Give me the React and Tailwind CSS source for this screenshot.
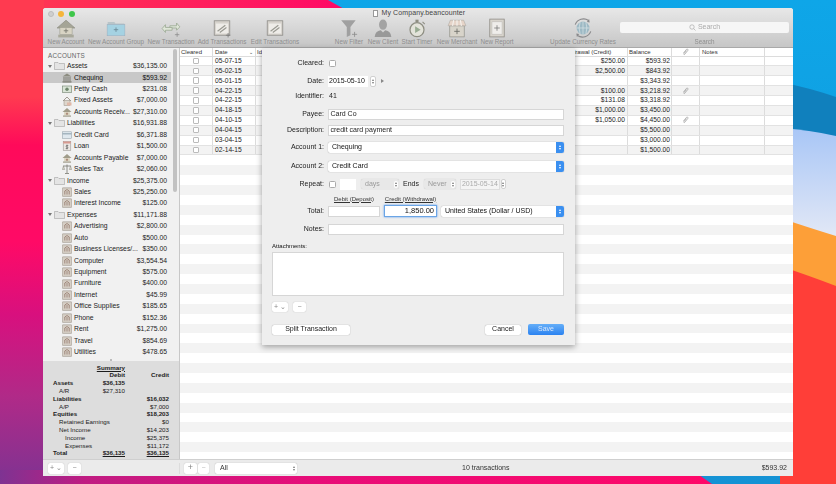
import React from "react";

const Wallpaper = () => (
  <svg className="absolute inset-0" width="836" height="484" viewBox="0 0 836 484">
    <defs>
      <linearGradient id="sky" x1="0" y1="0" x2="0" y2="1"><stop offset="0" stopColor="#0ea6e8" /><stop offset="1" stopColor="#1592d4" /></linearGradient>
      <linearGradient id="cloud" x1="0" y1="0" x2="0" y2="1"><stop offset="0" stopColor="#a8c6f6" /><stop offset="1" stopColor="#e4e9f6" /></linearGradient>
      <linearGradient id="leftg" x1="0" y1="0" x2="0" y2="1">
        <stop offset="0" stopColor="#ff3a50" /><stop offset="0.2" stopColor="#ff3a50" /><stop offset="0.3" stopColor="#ff0a5a" /><stop offset="0.5" stopColor="#ff0a66" /><stop offset="0.65" stopColor="#d8107e" /><stop offset="0.82" stopColor="#b02a88" /><stop offset="1" stopColor="#7e3392" />
      </linearGradient>
      <linearGradient id="topg" x1="0" y1="0" x2="1" y2="0"><stop offset="0" stopColor="#ff3a50" /><stop offset="1" stopColor="#ff0a66" /></linearGradient>
      <linearGradient id="botg" x1="0" y1="0" x2="1" y2="0">
        <stop offset="0" stopColor="#7e3392" /><stop offset="0.12" stopColor="#c01c82" /><stop offset="0.45" stopColor="#e80d78" /><stop offset="1" stopColor="#ff0868" />
      </linearGradient>
    </defs>
    <rect width="836" height="484" fill="url(#sky)" />
    <path d="M780 82 Q810 88 836 97 V140 H780 Z" fill="#1080bd" />
    <path d="M780 128 Q810 130 836 136 V240 H780 Z" fill="url(#cloud)" />
    <path d="M780 218 Q810 228 836 236 V300 H780 Z" fill="#fd9f38" />
    <path d="M780 266 Q810 276 836 286 V484 H780 Z" fill="#ff3e38" />
    <path d="M0 0 H328 L346 10 H0 Z" fill="url(#topg)" />
    <rect width="44" height="484" fill="url(#leftg)" />
    <path d="M0 470 H692 L712 484 H0 Z" fill="url(#botg)" />
  </svg>
);

const Tool = ({ w, label, children }) => (
  <div className={`flex flex-col items-center shrink-0 ${w}`}>
    <div className="h-[18px] flex items-center justify-center">{children}</div>
    <span className="text-[6.3px] leading-[8px] text-[#8e8e8e] mt-[1px] whitespace-nowrap">{label}</span>
  </div>
);

const S = ({ children }) => (
  <svg width="20" height="20" viewBox="0 0 18 18" fill="none">{children}</svg>
);

const IcoHouse = () => (
  <S><path d="M1 9 L9 2 L17 9 Z" fill="#a5a596" stroke="#8b8b80" strokeWidth=".6" /><rect x="3.5" y="8.5" width="11" height="6.5" fill="#d8d4c4" stroke="#9a9a8c" strokeWidth=".5" /><rect x="2" y="15" width="14" height="2.5" fill="#a9a99b" /><path d="M9 9.5v4M7 11.5h4" stroke="#77776e" strokeWidth=".8" /></S>
);
const IcoFolder = () => (
  <S><path d="M1.5 3.5h6l1 1.5h8v2h-15z" fill="#b9c4c8" /><rect x="1" y="6" width="16" height="10" fill="#a5d2e2" stroke="#9ab" strokeWidth=".4" /><path d="M9 8.5v4M7 10.5h4" stroke="#6c8c9a" strokeWidth=".8" /></S>
);
const IcoTrans = () => (
  <S><path d="M8 7H14V4.500L17 8L14 11V9H8z" fill="#dfe6d8" stroke="#98a890" strokeWidth=".7" /><path d="M10 8.500H4V6L1 9.500L4 13V11h6z" fill="#dfe6d8" stroke="#98a890" strokeWidth=".7" /><path d="M14.500 13v4M12.500 15h4" stroke="#8c8c8c" strokeWidth=".7" /></S>
);
const IcoBox = ({ plus }) => (
  <S><rect x="2" y="2.500" width="14" height="13" fill="#d6d2cc" stroke="#8c8a86" strokeWidth=".7" /><rect x="3.500" y="5" width="11" height="9" fill="#eeece8" /><path d="M5 12 L12 6.500M7 13L13 8.500" stroke="#9a9a92" strokeWidth="1.100" />{plus && <path d="M14.500 13.500v4M12.500 15.500h4" stroke="#777" strokeWidth=".7" />}</S>
);
const IcoFunnel = () => (
  <S><path d="M2 2 H15 L10.300 8 V15.500 L7 17 V8 Z" fill="#a0a0a0" /><path d="M14 12.500v4.500M11.700 14.700h4.600" stroke="#888" strokeWidth=".7" /></S>
);
const IcoPerson = () => (
  <S><ellipse cx="9" cy="6" rx="3.600" ry="4.600" fill="#a3a3a3" /><path d="M1.500 17 Q2 11.500 7 11 L9 13 L11 11 Q16 11.500 16.500 17 Z" fill="#999" /></S>
);
const IcoTimer = () => (
  <S><circle cx="9" cy="10.500" r="6.300" fill="#e3e3da" stroke="#8e8e82" strokeWidth="1.100" /><path d="M7.300 7.500 L12.300 10.500 L7.300 13.500 Z" fill="#98ab92" /><rect x="7.600" y="1.500" width="2.800" height="2.200" fill="#8e8e82" /><path d="M14 3.500l2 2" stroke="#8e8e82" /></S>
);
const IcoShop = () => (
  <S><rect x="2.500" y="7" width="13" height="10" fill="#d8d4ca" stroke="#8d8d85" strokeWidth=".6" /><path d="M3 2h12l2 5H1z" fill="#e6d4c8" stroke="#a09a92" strokeWidth=".4" /><path d="M6 2 5 7M9 2v5M12 2l1 5" stroke="#f4f2ee" strokeWidth="1" /><path d="M9 9.500v5M6.500 12h5" stroke="#6e6e68" strokeWidth=".8" /></S>
);
const IcoReport = () => (
  <S><rect x="2.500" y="1" width="13" height="16" fill="#d8d4cc" stroke="#8d8a84" strokeWidth=".7" /><rect x="4.500" y="3.500" width="9" height="11" fill="#efedea" stroke="#aaa" strokeWidth=".3" /><path d="M9 6.500v5M6.500 9h5" stroke="#777" strokeWidth=".7" /></S>
);
const IcoGlobe = () => (
  <S><circle cx="9" cy="9" r="5.800" fill="#9db9c4" /><path d="M9 3.200v11.600M3.200 9h11.600M6.400 3.800Q4.600 9 6.400 14.200M11.600 3.800Q13.400 9 11.600 14.200" stroke="#dde6e8" strokeWidth=".6" /><path d="M2 6 A8 8 0 0 1 14 2.200M16 12 A8 8 0 0 1 4 15.800" stroke="#88888a" strokeWidth="1" /><path d="M14.500 1 L15 4 L12.500 3.600Z M3.500 17 L3 14 L5.500 14.400Z" fill="#88888a" /></S>
);

const Mini = ({ children }) => <svg width="10" height="10" viewBox="0 0 10 10" fill="none" className="shrink-0">{children}</svg>;
const sideIcons = {
  folder: <svg width="11" height="8" viewBox="0 0 11 8" className="shrink-0"><path d="M.5.5h3.500l1 1h5.500v6h-10z" fill="#e4e4e4" stroke="#a3a3a3" strokeWidth=".6" /></svg>,
  bank: <Mini><path d="M.5 3.500 5 .5l4.500 3z" fill="#8c8c80" /><path d="M2 4v4M4 4v4M6 4v4M8 4v4" stroke="#77776c" strokeWidth="1" /><rect x=".5" y="8.300" width="9" height="1.200" fill="#77776c" /></Mini>,
  cash: <Mini><rect x=".3" y="2" width="9.400" height="6.500" fill="#d9e4d6" stroke="#70806e" strokeWidth=".6" /><circle cx="5" cy="5.200" r="1.700" fill="#6f866c" /></Mini>,
  fixed: <Mini><path d="M1 5 5 1l4 4" stroke="#8c8478" strokeWidth=".8" /><rect x="2" y="4.500" width="6" height="5" fill="#ddd6cc" stroke="#948c80" strokeWidth=".5" /><rect x="5" y="6.500" width="4.500" height="3" fill="#e0b8a8" /></Mini>,
  house: <Mini><path d="M.5 5 5 1l4.500 4z" fill="#a09c8a" /><rect x="2" y="5" width="6" height="3.500" fill="#ded8c6" /><rect x="1" y="8.500" width="8" height="1.200" fill="#a09c8a" /><path d="M5 5.500v2.500M3.800 6.800h2.400" stroke="#8c5a4a" strokeWidth=".6" /></Mini>,
  card: <Mini><rect x=".3" y="1.800" width="9.400" height="6.500" fill="#dfe8ee" stroke="#8c9aa4" strokeWidth=".5" /><rect x=".5" y="3.200" width="9" height="1.200" fill="#96a8b4" /></Mini>,
  loan: <Mini><rect x="1.200" y=".5" width="7.600" height="9" fill="#ece8e4" stroke="#8e8a86" strokeWidth=".5" /><rect x="1.200" y=".5" width="7.600" height="2" fill="#d89a90" /><path d="M5 3.500v5M6.300 4.500H4.500a.8.8 0 0 0 0 1.500h1a.8.8 0 0 1 0 1.500H3.700" stroke="#444" strokeWidth=".5" /></Mini>,
  scale: <Mini><path d="M5 .5V9M1 2h8M3 9.500h4" stroke="#77776e" strokeWidth=".8" /><path d="M.3 5.500 1.500 2l1.200 3.500zM7.300 5.500 8.500 2l1.200 3.500z" fill="#d8d4c8" stroke="#77776e" strokeWidth=".4" /></Mini>,
  exp: <Mini><rect x=".3" y=".8" width="9.400" height="8.600" rx=".6" fill="#d6cfc6" stroke="#90887e" strokeWidth=".5" /><path d="M2.800 7.500V4L5 2.500 7.200 4v3.500" stroke="#8a6a5c" strokeWidth=".7" /><path d="M5 4v3.500" stroke="#8a6a5c" strokeWidth=".7" /></Mini>,
};

const accounts = [
  ["g", "Assets", "$36,135.00"],
  ["bank", "Chequing", "$593.92", true],
  ["cash", "Petty Cash", "$231.08"],
  ["fixed", "Fixed Assets", "$7,000.00"],
  ["house", "Accounts Receiv...", "$27,310.00"],
  ["g", "Liabilities", "$16,931.88"],
  ["card", "Credit Card", "$6,371.88"],
  ["loan", "Loan", "$1,500.00"],
  ["house", "Accounts Payable", "$7,000.00"],
  ["scale", "Sales Tax", "$2,060.00"],
  ["g", "Income", "$25,375.00"],
  ["exp", "Sales", "$25,250.00"],
  ["exp", "Interest Income", "$125.00"],
  ["g", "Expenses", "$11,171.88"],
  ["exp", "Advertising", "$2,800.00"],
  ["exp", "Auto", "$500.00"],
  ["exp", "Business Licenses/...", "$350.00"],
  ["exp", "Computer", "$3,554.54"],
  ["exp", "Equipment", "$575.00"],
  ["exp", "Furniture", "$400.00"],
  ["exp", "Internet", "$45.99"],
  ["exp", "Office Supplies", "$185.65"],
  ["exp", "Phone", "$152.36"],
  ["exp", "Rent", "$1,275.00"],
  ["exp", "Travel", "$854.69"],
  ["exp", "Utilities", "$478.65"],
];

const summary = [
  ["Assets", "pl-[10px]", "$36,135", "", true],
  ["A/R", "pl-[16px]", "$27,310", "", false],
  ["Liabilities", "pl-[10px]", "", "$16,032", true],
  ["A/P", "pl-[16px]", "", "$7,000", false],
  ["Equities", "pl-[10px]", "", "$18,203", true],
  ["Retained Earnings", "pl-[16px]", "", "$0", false],
  ["Net Income", "pl-[16px]", "", "$14,203", false],
  ["Income", "pl-[22px]", "", "$25,375", false],
  ["Expenses", "pl-[22px]", "", "$11,172", false],
];

const rows = [
  ["05-07-15", "$250.00", "$593.92", false],
  ["05-02-15", "$2,500.00", "$843.92", false],
  ["05-01-15", "", "$3,343.92", false],
  ["04-22-15", "$100.00", "$3,218.92", true],
  ["04-22-15", "$131.08", "$3,318.92", false],
  ["04-18-15", "$1,000.00", "$3,450.00", false],
  ["04-10-15", "$1,050.00", "$4,450.00", true],
  ["04-04-15", "", "$5,500.00", false],
  ["03-04-15", "", "$3,000.00", false],
  ["02-14-15", "", "$1,500.00", false],
];

const Clip = () => (
  <svg width="7" height="8" viewBox="0 0 7 8" fill="none"><path d="M1.500 5 4.500 1.300a.9.9 0 0 1 1.400 1.100L2.700 6.300a.5.5 0 0 1-.9-.6L4.500 2.600" stroke="#9a9a9a" strokeWidth=".7" /></svg>
);

const Stepper = ({ cls = "h-[11px] w-[6px]" }) => (
  <span className={`flex flex-col items-center justify-center gap-[1px] bg-white rounded-[2px] border border-[#d0d0d0] shrink-0 ${cls}`}>
    <span className="w-0 h-0 border-x-[1.5px] border-x-transparent border-b-[2px] border-b-[#777]" />
    <span className="w-0 h-0 border-x-[1.5px] border-x-transparent border-t-[2px] border-t-[#777]" />
  </span>
);

const BlueSelect = ({ text, cls }) => (
  <div className={`h-[11px] bg-white rounded-[2px] shadow-[0_0_1px_#888] flex items-center justify-between ${cls}`}>
    <span className="pl-[4px] text-[7px] text-[#111]">{text}</span>
    <span className="w-[8px] h-full bg-[#3a8ff0] rounded-r-[2px] flex flex-col items-center justify-center gap-[1px]">
      <span className="w-0 h-0 border-x-[1.5px] border-x-transparent border-b-[2px] border-b-white" />
      <span className="w-0 h-0 border-x-[1.5px] border-x-transparent border-t-[2px] border-t-white" />
    </span>
  </div>
);

const Label = ({ children }) => (
  <span className="w-[62px] text-right text-[7px] text-[#1c1c1c] shrink-0 mr-[4px]">{children}</span>
);
const Input = ({ children, cls = "w-[236px]" }) => (
  <div className={`h-[11px] bg-white border border-[#d6d6d6] flex items-center px-[1.500px] text-[7px] text-[#1c1c1c] ${cls}`}>{children}</div>
);
const SmallBtn = ({ cls, children }) => (
  <div className={`bg-white rounded-[2px] shadow-[0_0_1px_#aaa] flex items-center justify-center text-[7px] text-[#888] ${cls}`}>{children}</div>
);

const Dialog = () => (
  <div className="absolute left-[219px] top-0 w-[313px] h-[297px] bg-[#eeeeee] shadow-[0_2px_6px_rgba(0,0,0,0.35)] flex flex-col pt-[9px] z-10">
    <div className="flex items-center h-[12px]"><Label>Cleared:</Label><span className="w-[7px] h-[7px] ml-[1px] bg-white border border-[#aaa] rounded-[1.500px]" /></div>
    <div className="flex items-center h-[12px] mt-[6px]">
      <Label>Date:</Label>
      <div className="h-[11px] w-[40px] bg-white flex items-center pl-[1px] text-[7px] text-[#111]">2015-05-10</div>
      <Stepper cls="h-[11px] w-[6px] ml-[2px]" />
      <span className="ml-[5px] w-0 h-0 border-y-[2px] border-y-transparent border-l-[3px] border-l-[#888]" />
    </div>
    <div className="flex items-center h-[12px] mt-[3px]"><Label>Identifier:</Label><span className="text-[7px] text-[#1c1c1c] ml-[1px]">41</span></div>
    <div className="flex items-center h-[12px] mt-[6px]"><Label>Payee:</Label><Input>Card Co</Input></div>
    <div className="flex items-center h-[12px] mt-[4px]"><Label>Description:</Label><Input>credit card payment</Input></div>
    <div className="flex items-center h-[12px] mt-[5px]"><Label>Account 1:</Label><BlueSelect text="Chequing" cls="w-[236px]" /></div>
    <div className="flex items-center h-[12px] mt-[7px]"><Label>Account 2:</Label><BlueSelect text="Credit Card" cls="w-[236px]" /></div>
    <div className="flex items-center h-[12px] mt-[6px]">
      <Label>Repeat:</Label>
      <span className="w-[7px] h-[7px] ml-[1px] bg-white border border-[#aaa] rounded-[1.500px]" />
      <span className="w-[16px] h-[11px] bg-white ml-[4px]" />
      <div className="w-[38px] h-[10px] bg-[#e8e8e8] ml-[5px] flex items-center justify-between pl-[4px] pr-[1px] text-[7px] text-[#999] shadow-[0_0_1px_#bbb] rounded-[2px]">days<Stepper cls="h-[7px] w-[4px] border-0 bg-transparent" /></div>
      <span className="text-[7px] text-[#1c1c1c] ml-[4px]">Ends</span>
      <div className="w-[32px] h-[10px] bg-[#e8e8e8] ml-[5px] flex items-center justify-between pl-[4px] pr-[1px] text-[7px] text-[#999] shadow-[0_0_1px_#bbb] rounded-[2px]">Never<Stepper cls="h-[7px] w-[4px] border-0 bg-transparent" /></div>
      <div className="w-[40px] h-[11px] bg-[#f4f4f4] ml-[4px] border border-[#ddd] flex items-center pl-[1px] text-[7px] text-[#aaa] whitespace-nowrap">2015-05-14</div>
      <Stepper cls="h-[10px] w-[5px] ml-[1px]" />
    </div>
    <div className="flex items-center h-[6px] mt-[6px] pl-[66px] text-[6px] text-[#333] underline">
      <span className="w-[52px] text-center">Debit (Deposit)</span>
      <span className="w-[53px] text-center ml-[4px] whitespace-nowrap">Credit (Withdrawal)</span>
    </div>
    <div className="flex items-center h-[12px] mt-[3px]">
      <Label>Total:</Label>
      <Input cls="w-[52px]" />
      <div className="w-[53px] h-[12px] ml-[4px] bg-white border border-[#6aa5e6] shadow-[0_0_2px_#5a9cf0] flex items-center justify-end pr-[2px] text-[7.500px] text-[#111]">1,850.00</div>
      <BlueSelect text="United States (Dollar / USD)" cls="w-[123px] ml-[4px]" />
    </div>
    <div className="flex items-center h-[12px] mt-[6px]"><Label>Notes:</Label><Input /></div>
    <div className="h-[8px] mt-[7px] pl-[10px] text-[6px] leading-[8px] text-[#111]">Attachments:</div>
    <div className="h-[44px] mt-[2px] ml-[10px] w-[292px] bg-white border border-[#d6d6d6]" />
    <div className="flex h-[10px] mt-[6px] ml-[10px] gap-[5px]">
      <SmallBtn cls="w-[16px]">+ ⌄</SmallBtn>
      <SmallBtn cls="w-[13px]">−</SmallBtn>
    </div>
    <div className="flex items-center h-[11px] mt-[12px] ml-[10px] w-[292px]">
      <div className="w-[78px] h-[10px] bg-white rounded-[2px] shadow-[0_0_1px_#888] flex items-center justify-center text-[7px] text-[#1c1c1c]">Split Transaction</div>
      <div className="w-[36px] h-[10px] ml-auto bg-white rounded-[2px] shadow-[0_0_1px_#888] flex items-center justify-center text-[7px] text-[#1c1c1c]">Cancel</div>
      <div className="w-[36px] h-[11px] ml-[7px] bg-gradient-to-b from-[#64aef8] to-[#2a82f0] rounded-[2px] flex items-center justify-center text-[7px] text-[#d8e8fc]">Save</div>
    </div>
  </div>
);

export default function App() {
  return (
    <div className="relative w-[836px] h-[484px] overflow-hidden font-['Liberation_Sans',sans-serif]">
      <Wallpaper />
      <div className="absolute left-[43px] top-[8px] w-[750px] h-[468px] rounded-t-[3px] flex flex-col bg-white overflow-hidden blur-[0.4px]">
        {/* toolbar */}
        <div className="h-[40px] shrink-0 bg-gradient-to-b from-[#e8e8e8] to-[#c6c6c6] border-b border-[#a9a9a9] flex flex-col">
          <div className="h-[11px] flex items-center shrink-0">
            <div className="flex gap-[4.500px] pl-[4.500px] pt-[1px]">
              <span className="w-[6px] h-[6px] rounded-full bg-[#cfcfcf] border border-[#bdbdbd]" />
              <span className="w-[6px] h-[6px] rounded-full bg-[#f5b53a]" />
              <span className="w-[6px] h-[6px] rounded-full bg-[#3ec64a]" />
            </div>
            <span className="ml-[298px] w-[5px] h-[7px] bg-white border border-[#999] shrink-0" />
            <span className="ml-[4px] text-[7px] text-[#444] tracking-[0.1px]">My Company.beancounter</span>
          </div>
          <div className="flex items-start">
            <Tool w="w-[46px]" label="New Account"><IcoHouse /></Tool>
            <Tool w="w-[54px]" label="New Account Group"><IcoFolder /></Tool>
            <Tool w="w-[56px]" label="New Transaction"><IcoTrans /></Tool>
            <Tool w="w-[46px]" label="Add Transactions"><IcoBox plus /></Tool>
            <Tool w="w-[60px]" label="Edit Transactions"><IcoBox /></Tool>
            <div className="w-[27px] shrink-0" />
            <Tool w="w-[34px]" label="New Filter"><IcoFunnel /></Tool>
            <Tool w="w-[34px]" label="New Client"><IcoPerson /></Tool>
            <Tool w="w-[34px]" label="Start Timer"><IcoTimer /></Tool>
            <Tool w="w-[46px]" label="New Merchant"><IcoShop /></Tool>
            <Tool w="w-[34px]" label="New Report"><IcoReport /></Tool>
            <div className="w-[36px] shrink-0" />
            <Tool w="w-[66px]" label="Update Currency Rates"><IcoGlobe /></Tool>
            <div className="ml-[4px] w-[169px] flex flex-col items-center shrink-0">
              <div className="h-[11px] mt-[3px] mb-[4px] w-full bg-[#f6f6f6] rounded-[2px] flex items-center justify-center gap-[2px] text-[7px] text-[#aaa]">
                <svg width="7" height="7" viewBox="0 0 7 7" fill="none"><circle cx="3" cy="3" r="2.200" stroke="#aaa" strokeWidth=".7" /><path d="M4.700 4.700 6.500 6.500" stroke="#aaa" strokeWidth=".7" /></svg>
                Search
              </div>
              <span className="text-[6.300px] leading-[8px] text-[#8e8e8e] mt-[1px]">Search</span>
            </div>
          </div>
        </div>

        {/* body */}
        <div className="relative flex flex-1 min-h-0">
          {/* sidebar */}
          <div className="w-[137px] shrink-0 flex flex-col bg-[#f1f1f1] border-r border-[#c8c8c8]">
            <div className="flex h-[311px] shrink-0">
              <div className="w-[128px] shrink-0 flex flex-col">
                <div className="h-[12.500px] pl-[5px] pt-[4px] text-[6.300px] leading-[8px] text-[#666] tracking-[0.2px] shrink-0">ACCOUNTS</div>
                {accounts.map(([t, name, amt, sel]) =>
                  t === "g" ? (
                    <div key={name} className="h-[11.440px] flex items-center pl-[5px] pr-[4px] text-[6.800px] text-[#1c1c1c] shrink-0">
                      <span className="w-0 h-0 border-x-[2px] border-x-transparent border-t-[3px] border-t-[#777] mr-[2px]" />
                      {sideIcons.folder}
                      <span className="ml-[2px] flex-1">{name}</span>
                      <span>{amt}</span>
                    </div>
                  ) : (
                    <div key={name} className={`h-[11.440px] flex items-center pl-[19px] pr-[4px] text-[6.800px] shrink-0 ${sel ? "bg-[#c8c8c8] text-[#111]" : "text-[#1c1c1c]"}`}>
                      {sideIcons[t]}
                      <span className="ml-[2px] flex-1 whitespace-nowrap">{name}</span>
                      <span>{amt}</span>
                    </div>
                  )
                )}
              </div>
              <div className="flex-1">
                <div className="ml-[2px] w-[4px] h-[143px] mt-[1px] bg-[#c2c2c2] rounded-full" />
              </div>
            </div>
            <div className="h-[2px] flex justify-center shrink-0"><span className="w-[2px] h-[2px] rounded-full bg-[#aaa]" /></div>
            <div className="flex-1 bg-[#dddddd] flex flex-col text-[6.200px] leading-[7.800px] text-[#1c1c1c] pt-[2.600px]">
              <div className="w-[82px] text-right font-bold underline">Summary</div>
              <div className="flex font-bold">
                <span className="w-[82px] text-right">Debit</span><span className="w-[44px] text-right">Credit</span>
              </div>
              {summary.map(([n, pad, d, c, b]) => (
                <div key={n} className={`flex ${b ? "font-bold" : ""}`}>
                  <span className={`w-[57px] whitespace-nowrap ${pad}`}>{n}</span>
                  <span className="w-[25px] text-right">{d}</span>
                  <span className="w-[44px] text-right">{c}</span>
                </div>
              ))}
              <div className="flex font-bold">
                <span className="w-[57px] pl-[10px]">Total</span>
                <span className="w-[25px] text-right underline">$36,135</span>
                <span className="w-[44px] text-right underline">$36,135</span>
              </div>
            </div>
          </div>

          {/* table */}
          <div className="flex-1 min-w-0 bg-white flex flex-col overflow-hidden">
            <div className="h-[8.500px] shrink-0 flex text-[6px] leading-[8px] text-[#333] border-b border-[#dcdcdc]">
              <span className="w-[33px] pl-[1px] border-r border-[#dcdcdc]">Cleared</span>
              <span className="w-[43px] pl-[2px] border-r border-[#dcdcdc] flex justify-between pr-[2px]">Date<span className="text-[5px]">⌄</span></span>
              <span className="w-[302px] pl-[1px] border-r border-[#dcdcdc]">Id</span>
              <span className="w-[70px] pl-[2px] border-r border-[#dcdcdc] whitespace-nowrap">Withdrawal (Credit)</span>
              <span className="w-[44px] pl-[1px] border-r border-[#dcdcdc]">Balance</span>
              <span className="w-[28px] border-r border-[#dcdcdc] flex justify-center items-center"><Clip /></span>
              <span className="w-[65px] pl-[2px] border-r border-[#dcdcdc]">Notes</span>
            </div>
            {rows.map(([date, w, bal, clip], i) => (
              <div key={i} className={`h-[9.900px] shrink-0 flex items-center text-[6.700px] text-[#1c1c1c] border-b border-[#e2e2e2] ${i % 2 ? "bg-[#f3f3f3]" : "bg-white"}`}>
                <span className="w-[33px] h-full flex items-center justify-center border-r border-[#dcdcdc]"><span className="w-[6.500px] h-[6.500px] bg-white border border-[#bbb] rounded-[1px]" /></span>
                <span className="w-[43px] pl-[2px] border-r border-[#dcdcdc] h-full flex items-center">{date}</span>
                <span className="w-[302px] border-r border-[#dcdcdc] h-full" />
                <span className="w-[70px] pr-[2px] border-r border-[#dcdcdc] h-full flex items-center justify-end">{w}</span>
                <span className="w-[44px] pr-[1px] border-r border-[#dcdcdc] h-full flex items-center justify-end">{bal}</span>
                <span className="w-[28px] border-r border-[#dcdcdc] h-full flex items-center justify-center">{clip && <Clip />}</span>
                <span className="w-[65px] border-r border-[#dcdcdc] h-full" />
              </div>
            ))}
            {Array.from({ length: 31 }, (_, i) => (
              <div key={i} className={`h-[9.900px] shrink-0 ${i % 2 ? "bg-[#f3f3f3]" : "bg-white"}`} />
            ))}
          </div>
          <Dialog />
        </div>

        {/* bottom bar */}
        <div className="h-[17px] shrink-0 bg-[#ebebeb] border-t border-[#cfcfcf] flex items-center text-[7px] text-[#333]">
          <div className="w-[137px] shrink-0 flex pl-[5px] gap-[4px] h-[11px] border-r border-[#dcdcdc]">
            <SmallBtn cls="w-[16px]">+ ⌄</SmallBtn>
            <SmallBtn cls="w-[13px]">−</SmallBtn>
          </div>
          <div className="flex-1 flex items-center h-[11px] pl-[4px] pr-[6px]">
            <SmallBtn cls="w-[13px] h-full text-[9px]">+</SmallBtn>
            <SmallBtn cls="w-[11px] h-full ml-[1px] text-[#bbb]">−</SmallBtn>
            <div className="w-[82px] h-full ml-[6px] bg-white rounded-[2px] shadow-[0_0_1px_#999] flex items-center justify-between pl-[5px] pr-[1px]">All<Stepper cls="h-[8px] w-[5px] border-0 bg-transparent" /></div>
            <span className="ml-[165px] whitespace-nowrap">10 transactions</span>
            <span className="ml-auto">$593.92</span>
          </div>
        </div>
      </div>
    </div>
  );
}
